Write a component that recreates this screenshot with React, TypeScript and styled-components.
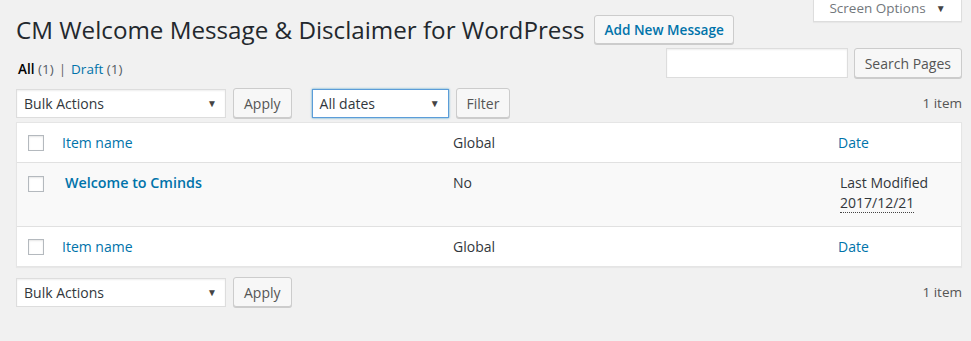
import React from 'react'
import styled, { createGlobalStyle } from 'styled-components'

const Global = createGlobalStyle`
  html, body {
    margin: 0;
    padding: 0;
    background: #f1f1f1;
    font-family: 'Open Sans', 'Noto Sans', sans-serif;
    color: #444;
  }
`

const Wrap = styled.div`
  padding: 0 9px 0 16px;
  width: 971px;
  height: 341px;
  box-sizing: border-box;
  overflow: hidden;
`

const Header = styled.header`
  display: flex;
  justify-content: space-between;
  align-items: flex-start;
`

const TitleRow = styled.div`
  display: flex;
  align-items: center;
  gap: 10px;
  margin-top: 14px;
`

const Title = styled.h1`
  margin: 0;
  font-size: 24.2px;
  font-weight: 400;
  color: #23282d;
  line-height: 31px;
`

const Button = styled.button<{ $primaryText?: boolean }>`
  height: ${p => (p.$primaryText ? '29px' : '30px')};
  padding: 0 ${p => (p.$primaryText ? 9 : 10)}px;
  border: 1px solid #ccc;
  border-radius: 3px;
  background: #f7f7f7;
  box-shadow: 0 1px 0 #ccc;
  font-family: inherit;
  font-size: ${p => (p.$primaryText ? '13.6px' : '14px')};
  font-weight: ${p => (p.$primaryText ? 600 : 400)};
  color: ${p => (p.$primaryText ? '#0073aa' : '#555')};
  cursor: pointer;
`

const ScreenTab = styled.div`
  width: 149px;
  height: 22px;
  box-sizing: border-box;
  padding-top: 1px;
  background: #fff;
  border: 1px solid #ddd;
  border-top: none;
  box-shadow: 0 1px 1px rgba(0, 0, 0, 0.04);
  display: flex;
  align-items: flex-start;
  justify-content: center;
  gap: 10px;
  font-size: 13.5px;
  line-height: 14px;
  color: #72777c;
`

const Caret = styled.span`
  font-size: 10px;
  color: #444;
`

const SearchRow = styled.div`
  display: flex;
  justify-content: space-between;
  align-items: flex-end;
  margin-top: 3px;
`

const SubSub = styled.div`
  font-size: 13.5px;
  color: #666;
  padding: 0 0 0 2px;
  display: flex;
  gap: 5px;
`

const Current = styled.span`
  color: #000;
  font-weight: 600;
`

const Link = styled.a`
  color: #0073aa;
  text-decoration: none;
`

const Count = styled.span`
  color: #555d66;
`

const Search = styled.div`
  display: flex;
  gap: 6px;
  align-items: center;
`

const SearchInput = styled.div`
  width: 182px;
  height: 30px;
  box-sizing: border-box;
  background: #fff;
  border: 1px solid #ddd;
  box-shadow: inset 0 1px 2px rgba(0, 0, 0, 0.07);
`

const TableNav = styled.div<{ $top?: boolean }>`
  display: flex;
  align-items: center;
  justify-content: space-between;
  margin: ${p => (p.$top ? '10px 0 4px' : '10px 0 0')};
  height: 30px;
`

const Actions = styled.div`
  display: flex;
  align-items: center;
  gap: 7px;
`

const Select = styled.div<{ $w: number; $focus?: boolean }>`
  width: ${p => p.$w}px;
  height: 29px;
  box-sizing: border-box;
  background: #fff;
  border: 1px solid ${p => (p.$focus ? '#5b9dd9' : '#ddd')};
  box-shadow: ${p => (p.$focus ? '0 0 2px rgba(30, 140, 190, 0.8)' : 'inset 0 1px 2px rgba(0,0,0,0.07)')};
  display: flex;
  align-items: center;
  justify-content: space-between;
  padding: 0 8px 0 7px;
  font-size: 14px;
  color: #32373c;
`

const Gap = styled.span<{ $w: number }>`
  display: inline-block;
  width: ${p => p.$w}px;
`

const ItemCount = styled.div`
  font-size: 13.5px;
  color: #555;
`

const Table = styled.div`
  background: #fff;
  border: 1px solid #e5e5e5;
  box-shadow: 0 1px 1px rgba(0, 0, 0, 0.04);
`

const Row = styled.div<{ $alt?: boolean; $tall?: boolean }>`
  display: grid;
  grid-template-columns: 45px 391px 385px 1fr;
  align-items: ${p => (p.$tall ? 'start' : 'center')};
  height: ${p => (p.$tall ? '63px' : '39px')};
  background: ${p => (p.$alt ? '#f9f9f9' : '#fff')};
  border-bottom: 1px solid #e1e1e1;
  font-size: 14px;
  &:last-child {
    border-bottom: none;
  }
`

const Cell = styled.div<{ $pad?: number; $shift?: number }>`
  padding-top: ${p => p.$pad ?? 0}px;
  padding-left: ${p => p.$shift ?? 0}px;
  color: #32373c;
  line-height: 20px;
`

const Check = styled.span<{ $top?: number }>`
  display: block;
  width: 16px;
  height: 16px;
  box-sizing: border-box;
  margin-left: 11px;
  margin-top: ${p => p.$top ?? 0}px;
  border: 1px solid #b4b9be;
  background: #fff;
  box-shadow: inset 0 1px 2px rgba(0, 0, 0, 0.1);
`

const SortLink = styled.a`
  color: #0073aa;
  text-decoration: none;
`

const RowTitle = styled.a`
  color: #0073aa;
  font-weight: 600;
  font-size: 14.3px;
  text-decoration: none;
  margin-left: 3px;
`

const Stamp = styled.span`
  border-bottom: 1px dotted #444;
`

function BulkNav({ top }: { top?: boolean }) {
  return (
    <TableNav $top={top}>
      <Actions>
        <Select $w={210}>Bulk Actions<Caret>▼</Caret></Select>
        <Button>Apply</Button>
        {top && (
          <>
            <Gap $w={6} />
            <Select $w={137} $focus>All dates<Caret>▼</Caret></Select>
            <Button>Filter</Button>
          </>
        )}
      </Actions>
      <ItemCount>1 item</ItemCount>
    </TableNav>
  )
}

function HeadRow() {
  return (
    <Row>
      <Check />
      <Cell><SortLink>Item name</SortLink></Cell>
      <Cell>Global</Cell>
      <Cell><SortLink>Date</SortLink></Cell>
    </Row>
  )
}

export default function App() {
  return (
    <Wrap>
      <Global />
      <Header>
        <TitleRow>
          <Title>CM Welcome Message &amp; Disclaimer for WordPress</Title>
          <Button $primaryText>Add New Message</Button>
        </TitleRow>
        <ScreenTab>Screen Options <Caret>▼</Caret></ScreenTab>
      </Header>
      <SearchRow>
        <SubSub>
          <span><Current>All</Current> <Count>(1)</Count></span>
          <span>|</span>
          <span><Link>Draft</Link> <Count>(1)</Count></span>
        </SubSub>
        <Search>
          <SearchInput />
          <Button>Search Pages</Button>
        </Search>
      </SearchRow>
      <BulkNav top />
      <Table>
        <HeadRow />
        <Row $alt $tall>
          <Check $top={13} />
          <Cell $pad={10}><RowTitle>Welcome to Cminds</RowTitle></Cell>
          <Cell $pad={10}>No</Cell>
          <Cell $pad={10} $shift={2}>
            <div>Last Modified</div>
            <div><Stamp>2017/12/21</Stamp></div>
          </Cell>
        </Row>
        <HeadRow />
      </Table>
      <BulkNav />
    </Wrap>
  )
}
